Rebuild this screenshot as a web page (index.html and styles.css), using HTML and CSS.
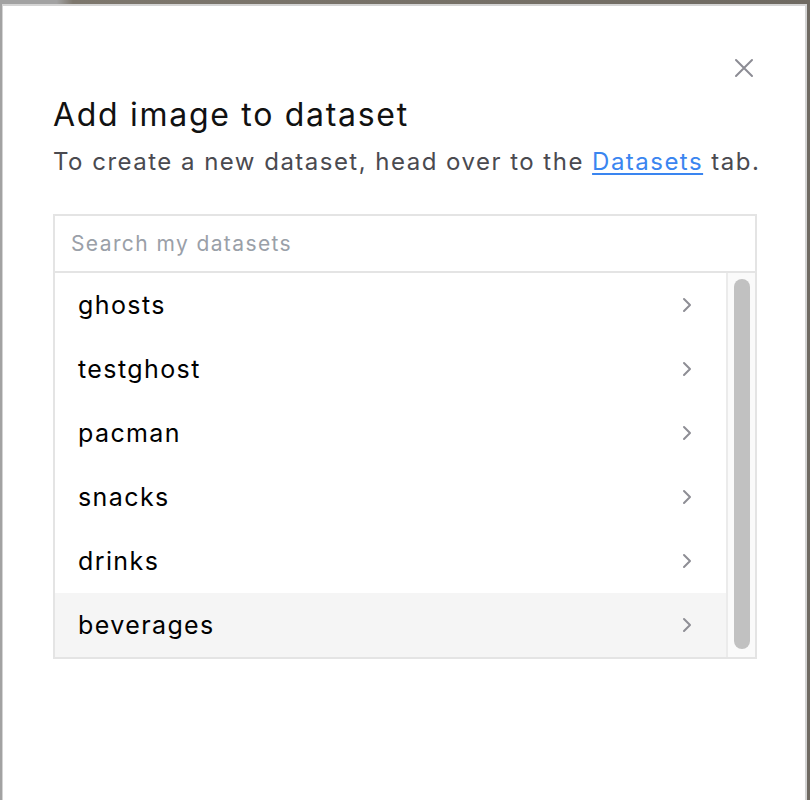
FILE: index.html
```html
<!DOCTYPE html>
<html lang="en">
<head>
<meta charset="utf-8">
<title>Add image to dataset</title>
<link rel="stylesheet" href="styles.css">
</head>
<body>
<div class="modal">
  <button class="close" aria-label="Close">
    <svg width="20" height="20" viewBox="0 0 20 20"><path d="M2 2 L18 18 M18 2 L2 18" stroke="#8c8c94" stroke-width="2" stroke-linecap="round"/></svg>
  </button>
  <h1 class="title">Add image to dataset</h1>
  <p class="subtitle">To create a new dataset, head over to the <a href="#" class="link">Datasets</a> tab.</p>
  <div class="panel">
    <div class="search">Search my datasets</div>
    <div class="body">
      <ul class="list">
        <li class="item"><span>ghosts</span><svg class="chev" width="10" height="16" viewBox="0 0 10 16"><path d="M2 2 L8 8 L2 14" fill="none" stroke="#8e8e95" stroke-width="2" stroke-linecap="round" stroke-linejoin="round"/></svg></li>
        <li class="item"><span>testghost</span><svg class="chev" width="10" height="16" viewBox="0 0 10 16"><path d="M2 2 L8 8 L2 14" fill="none" stroke="#8e8e95" stroke-width="2" stroke-linecap="round" stroke-linejoin="round"/></svg></li>
        <li class="item"><span>pacman</span><svg class="chev" width="10" height="16" viewBox="0 0 10 16"><path d="M2 2 L8 8 L2 14" fill="none" stroke="#8e8e95" stroke-width="2" stroke-linecap="round" stroke-linejoin="round"/></svg></li>
        <li class="item"><span>snacks</span><svg class="chev" width="10" height="16" viewBox="0 0 10 16"><path d="M2 2 L8 8 L2 14" fill="none" stroke="#8e8e95" stroke-width="2" stroke-linecap="round" stroke-linejoin="round"/></svg></li>
        <li class="item"><span>drinks</span><svg class="chev" width="10" height="16" viewBox="0 0 10 16"><path d="M2 2 L8 8 L2 14" fill="none" stroke="#8e8e95" stroke-width="2" stroke-linecap="round" stroke-linejoin="round"/></svg></li>
        <li class="item hover"><span>beverages</span><svg class="chev" width="10" height="16" viewBox="0 0 10 16"><path d="M2 2 L8 8 L2 14" fill="none" stroke="#8e8e95" stroke-width="2" stroke-linecap="round" stroke-linejoin="round"/></svg></li>
      </ul>
      <div class="track"><div class="thumb"></div></div>
    </div>
  </div>
</div>
</body>
</html>
```
FILE: styles.css
```css
html, body {
  margin: 0;
  height: 800px;
  overflow: hidden;
}
body {
  background: linear-gradient(90deg, #a2a2a2 0, #a2a2a2 7%, #7d776d 9%, #6f6a62 100%);
  font-family: Inter, "Noto Sans", sans-serif;
  padding: 4px 3px 0 2px;
  box-sizing: border-box;
}
.modal {
  position: relative;
  background: #fff;
  border-top: 2px solid #d4d4d4;
  border-left: 1px solid #d4d4d4;
  border-right: 2px solid #d4d4d4;
  height: 796px;
  box-sizing: border-box;
  padding: 0 50px;
}
.close {
  position: absolute;
  top: 52px;
  right: 51px;
  width: 20px;
  height: 20px;
  padding: 0;
  border: 0;
  background: none;
}
.close svg { display: block; }
.title {
  margin: 0;
  padding-top: 89px;
  font-size: 32px;
  line-height: 40px;
  font-weight: 400;
  color: #111;
  letter-spacing: 1.7px;
}
.subtitle {
  margin: 11px 0 0;
  font-size: 24px;
  line-height: 32px;
  color: #4a4a50;
  letter-spacing: 1.48px;
  white-space: nowrap;
}
.link {
  color: #3a85f0;
  text-decoration: underline;
  text-decoration-thickness: 2px;
  text-underline-offset: 3px;
}
.panel {
  margin-top: 36px;
  border: 2px solid #e4e4e4;
  width: 704px;
  box-sizing: border-box;
}
.search {
  height: 55px;
  border-bottom: 2px solid #e4e4e4;
  padding-left: 16px;
  display: flex;
  align-items: center;
  font-size: 21px;
  letter-spacing: 1.4px;
  color: #9aa0a8;
}
.body {
  display: flex;
}
.list {
  list-style: none;
  margin: 0;
  padding: 0;
  flex: 1;
}
.item {
  height: 64px;
  display: flex;
  align-items: center;
  justify-content: space-between;
  padding: 0 34px 0 23px;
  font-size: 25px;
  letter-spacing: 1.4px;
  color: #000;
}
.item.hover { background: #f5f5f5; }
.chev { display: block; }
.track {
  width: 29px;
  border-left: 2px solid #ebebeb;
  background: #fafafa;
  padding: 6px 5px 8px 6px;
  box-sizing: border-box;
}
.thumb {
  height: 100%;
  background: #c1c1c1;
  border-radius: 8px;
}
```
